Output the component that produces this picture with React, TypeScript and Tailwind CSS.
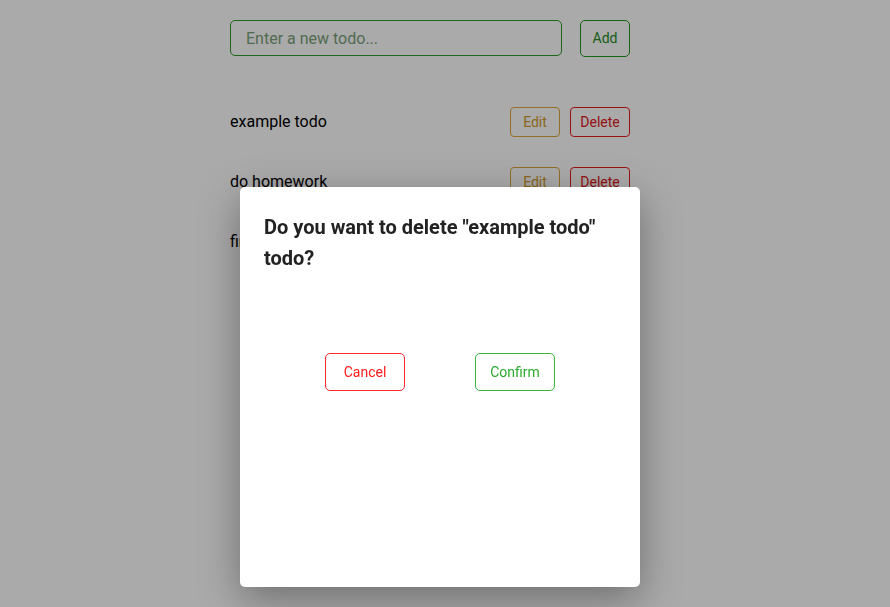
import React from "react";

const todos = ["example todo", "do homework", "finish project"];

export default function App() {
  return (
    <div
      className="relative min-h-screen w-full bg-white text-black"
      style={{ fontFamily: "Roboto, 'Liberation Sans', sans-serif" }}
    >
      <div className="ml-[230px] w-[400px] pt-[20px]">
        <div className="flex items-start gap-[18px]">
          <input
            className="h-[36px] w-[332px] rounded-[5px] border border-[#2f9a2f] px-[15px] text-[16px] outline-none placeholder:text-[#7aa27a]"
            placeholder="Enter a new todo..."
          />
          <button className="h-[37px] w-[50px] rounded-[5px] border border-[#1f9a1f] text-[14px] text-[#1f8a1f]">
            Add
          </button>
        </div>
        <div className="mt-[50px] flex flex-col gap-[30px]">
          {todos.map((t) => (
            <div key={t} className="flex h-[30px] items-center justify-between">
              <span className="text-[16px]">{t}</span>
              <div className="flex gap-[10px]">
                <button className="h-[30px] w-[50px] rounded-[4px] border border-[#dca63a] text-[14px] text-[#d29a2a]">
                  Edit
                </button>
                <button className="h-[30px] w-[60px] rounded-[4px] border border-[#e31d1d] text-[14px] text-[#e01a1a]">
                  Delete
                </button>
              </div>
            </div>
          ))}
        </div>
      </div>

      <div className="fixed inset-0 bg-[rgba(0,0,0,0.333)]" />

      <div className="absolute left-[240px] top-[187px] flex h-[400px] w-[400px] flex-col rounded-[5px] bg-white px-[24px] pt-[25px] shadow-[0_12px_40px_rgba(0,0,0,0.35)]">
        <h2 className="text-[20px] font-bold leading-[31px] text-[#222]">
          Do you want to delete "example todo" todo?
        </h2>
        <div className="mt-[79px] flex justify-center gap-[70px]">
          <button className="h-[38px] w-[80px] rounded-[5px] border border-[#ff2a2a] text-[14px] text-[#ff1a1a]">
            Cancel
          </button>
          <button className="h-[38px] w-[80px] rounded-[5px] border border-[#3ab53a] text-[14px] text-[#2aaa2a]">
            Confirm
          </button>
        </div>
      </div>
    </div>
  );
}
